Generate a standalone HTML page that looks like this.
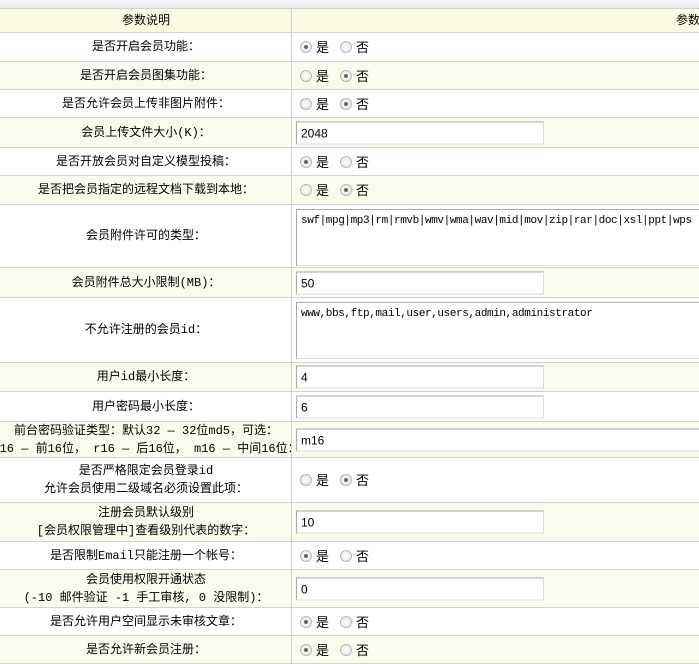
<!DOCTYPE html>
<html><head><meta charset="utf-8">
<style>
*{margin:0;padding:0;box-sizing:border-box}
body{width:699px;height:663px;overflow:hidden;background:#fff;font-family:"Liberation Mono","Noto Sans CJK SC","WenQuanYi Zen Hei",monospace;font-size:12px;color:#000;position:relative}
.top{position:absolute;left:0;top:0;width:699px;height:8px;background:linear-gradient(#f6f6f6,#ebebeb)}
.r{position:absolute;left:0;width:699px;border-bottom:1px solid #d2d2d2}
.w{background:#fff}.c{background:#f9fbed}.h{background:#fbfbe2}
.l{position:absolute;left:0;top:0;width:292px;height:100%;border-right:1px solid #d2d2d2;overflow:hidden}
.lt{position:absolute;left:146px;top:50%;transform:translate(-50%,-50%);white-space:nowrap;text-align:center;line-height:18px}
.v{position:absolute;left:293px;top:0;right:0;height:100%}
.rad{position:absolute;top:50%;transform:translateY(-50%);height:14px;line-height:14px}
.o{display:inline-block;width:12px;height:12px;border-radius:50%;border:1px solid #b8b8b8;background:radial-gradient(circle,#fdfdfd,#e4e4e4);vertical-align:top;position:relative;margin-top:1px}
.o.on::after{content:"";position:absolute;left:3px;top:3px;width:4px;height:4px;border-radius:50%;background:#666}
.rad span.t{display:inline-block;margin-left:4px;margin-right:11px;font-size:13px;font-family:"Noto Sans CJK SC",sans-serif}
.in{position:absolute;left:3px;top:50%;transform:translateY(-50%);width:248px;height:23px;border:1px solid #aaa;border-right-color:#ddd;border-bottom-color:#ddd;background:#fff;font-family:"Liberation Sans",sans-serif;font-size:12px;padding:4px 4px;line-height:14px}
.ta{position:absolute;left:3px;top:4px;width:420px;height:57px;border:1px solid #aaa;border-right:none;border-bottom-color:#ddd;background:#fff;font-family:"Liberation Mono",monospace;font-size:11px;padding:4px 4px;line-height:14px;white-space:nowrap;letter-spacing:-0.4px}
</style></head><body>
<div class="top"></div>

<div class="r h" style="top:8px;height:25px;border-top:1px solid #d2d2d2"><div class="l"><div class="lt">参数说明</div></div><div class="v"><div class="lt" style="left:auto;right:-1px;transform:translateY(-50%)">参数</div></div></div>

<div class="r w" style="top:33px;height:29px"><div class="l"><div class="lt">是否开启会员功能：</div></div><div class="v"><div class="rad" style="left:7px"><span class="o on"></span><span class="t">是</span><span class="o"></span><span class="t">否</span></div></div></div>

<div class="r c" style="top:62px;height:28px"><div class="l"><div class="lt">是否开启会员图集功能：</div></div><div class="v"><div class="rad" style="left:7px"><span class="o"></span><span class="t">是</span><span class="o on"></span><span class="t">否</span></div></div></div>

<div class="r w" style="top:90px;height:28px"><div class="l"><div class="lt">是否允许会员上传非图片附件：</div></div><div class="v"><div class="rad" style="left:7px"><span class="o"></span><span class="t">是</span><span class="o on"></span><span class="t">否</span></div></div></div>

<div class="r c" style="top:118px;height:30px"><div class="l"><div class="lt">会员上传文件大小(K)：</div></div><div class="v"><div class="in">2048</div></div></div>

<div class="r w" style="top:148px;height:28px"><div class="l"><div class="lt">是否开放会员对自定义模型投稿：</div></div><div class="v"><div class="rad" style="left:7px"><span class="o on"></span><span class="t">是</span><span class="o"></span><span class="t">否</span></div></div></div>

<div class="r c" style="top:176px;height:29px"><div class="l"><div class="lt">是否把会员指定的远程文档下载到本地：</div></div><div class="v"><div class="rad" style="left:7px"><span class="o"></span><span class="t">是</span><span class="o on"></span><span class="t">否</span></div></div></div>

<div class="r w" style="top:205px;height:63px"><div class="l"><div class="lt">会员附件许可的类型：</div></div><div class="v"><div class="ta">swf|mpg|mp3|rm|rmvb|wmv|wma|wav|mid|mov|zip|rar|doc|xsl|ppt|wps</div></div></div>

<div class="r c" style="top:268px;height:30px"><div class="l"><div class="lt">会员附件总大小限制(MB)：</div></div><div class="v"><div class="in">50</div></div></div>

<div class="r w" style="top:298px;height:65px"><div class="l"><div class="lt">不允许注册的会员id：</div></div><div class="v"><div class="ta">www,bbs,ftp,mail,user,users,admin,administrator</div></div></div>

<div class="r c" style="top:363px;height:29px"><div class="l"><div class="lt">用户id最小长度：</div></div><div class="v"><div class="in">4</div></div></div>

<div class="r w" style="top:392px;height:30px"><div class="l"><div class="lt">用户密码最小长度：</div></div><div class="v"><div class="in">6</div></div></div>

<div class="r c" style="top:422px;height:36px"><div class="l"><div class="lt">前台密码验证类型：默认32 — 32位md5，可选：<br>c16 — 前16位， r16 — 后16位， m16 — 中间16位：</div></div><div class="v"><div class="in" style="width:420px;border-right:none">m16</div></div></div>

<div class="r w" style="top:458px;height:45px"><div class="l"><div class="lt">是否严格限定会员登录id<br>允许会员使用二级域名必须设置此项：</div></div><div class="v"><div class="rad" style="left:7px"><span class="o"></span><span class="t">是</span><span class="o on"></span><span class="t">否</span></div></div></div>

<div class="r c" style="top:503px;height:39px"><div class="l"><div class="lt">注册会员默认级别<br>[会员权限管理中]查看级别代表的数字：</div></div><div class="v"><div class="in">10</div></div></div>

<div class="r w" style="top:542px;height:28px"><div class="l"><div class="lt">是否限制Email只能注册一个帐号：</div></div><div class="v"><div class="rad" style="left:7px"><span class="o on"></span><span class="t">是</span><span class="o"></span><span class="t">否</span></div></div></div>

<div class="r c" style="top:570px;height:38px"><div class="l"><div class="lt">会员使用权限开通状态<br>(-10 邮件验证 -1 手工审核, 0 没限制)：</div></div><div class="v"><div class="in">0</div></div></div>

<div class="r w" style="top:608px;height:28px"><div class="l"><div class="lt">是否允许用户空间显示未审核文章：</div></div><div class="v"><div class="rad" style="left:7px"><span class="o on"></span><span class="t">是</span><span class="o"></span><span class="t">否</span></div></div></div>

<div class="r c" style="top:636px;height:28px"><div class="l"><div class="lt">是否允许新会员注册：</div></div><div class="v"><div class="rad" style="left:7px"><span class="o on"></span><span class="t">是</span><span class="o"></span><span class="t">否</span></div></div></div>
</body></html>
